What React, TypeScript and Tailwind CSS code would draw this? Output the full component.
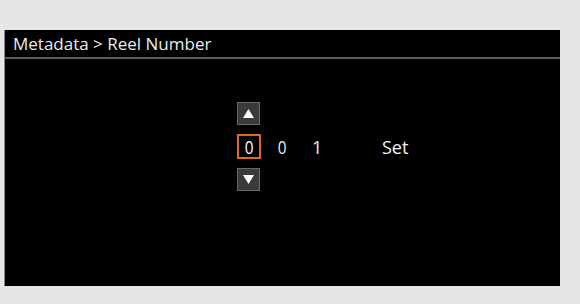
import React from "react";

const Arrow: React.FC<{ up?: boolean }> = ({ up }) => (
  <div className="w-[23px] h-[23px] bg-[#3a3a3a] border border-[#6a6a6a] flex items-center justify-center">
    <svg width="11" height="9" viewBox="0 0 11 9">
      {up ? (
        <polygon points="5.5,0 11,9 0,9" fill="#ffffff" />
      ) : (
        <polygon points="0,0 11,0 5.5,9" fill="#ffffff" />
      )}
    </svg>
  </div>
);

const App: React.FC = () => {
  return (
    <div
      className="w-[580px] h-[304px] bg-[#e6e6e6] pt-[30px] pl-[4px]"
      style={{ fontFamily: '"Open Sans", "Liberation Sans", sans-serif' }}
    >
      <div className="w-[556px] h-[256px] bg-black flex flex-col border-l border-[#8a8a8a]">
        <div className="h-[27px] flex items-center pl-[8px] text-[#ececec] text-[17px] leading-none">
          Metadata &gt; Reel Number
        </div>
        <div className="h-[2px] bg-[#5c5c5c]" />
        <div className="flex pl-[232px] pt-[43px]">
          <div className="flex flex-col gap-[9px]">
            <Arrow up />
            <div className="w-[24px] h-[25px] border-2 border-[#e0691f] flex items-center justify-center text-white text-[18px] leading-none">
              <span className="scale-x-[0.85]">0</span>
            </div>
            <Arrow />
          </div>
          <div className="flex flex-col justify-center text-[#f0f0f0] text-[18px] leading-none">
            <div className="flex items-center">
              <span className="ml-[16px] w-[9px] scale-x-[0.85]">0</span>
              <span className="ml-[26px] w-[9px]">1</span>
              <span className="ml-[61px]">Set</span>
            </div>
          </div>
        </div>
      </div>
    </div>
  );
};

export default App;
